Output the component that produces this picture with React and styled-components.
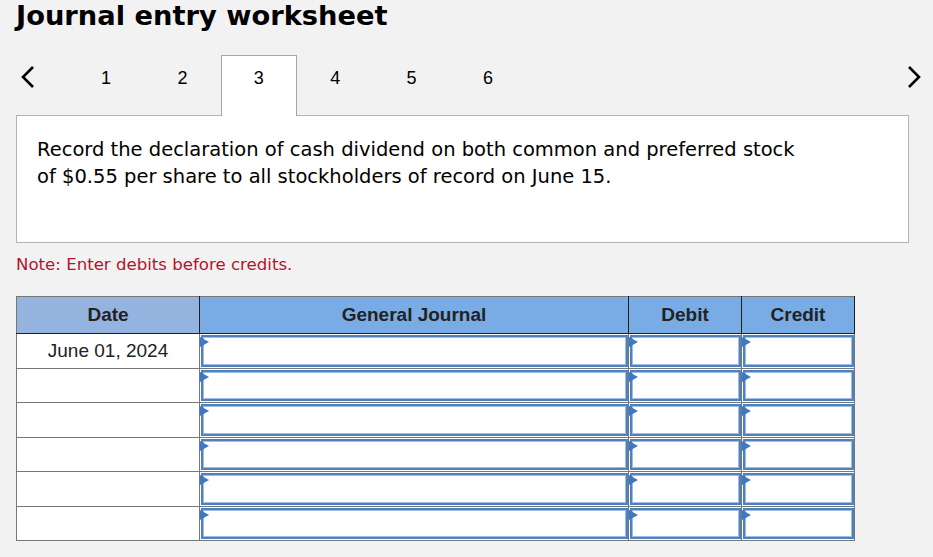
import React from "react";
import styled, { createGlobalStyle } from "styled-components";

const GlobalStyle = createGlobalStyle`
  html, body {
    margin: 0;
    padding: 0;
    background: #f2f2f2;
  }
  body {
    font-family: "DejaVu Sans", Verdana, sans-serif;
    color: #000;
  }
`;

const Page = styled.div`
  width: 933px;
  height: 557px;
  padding: 0 0 0 16px;
  box-sizing: border-box;
  overflow: hidden;
`;

const Title = styled.h1`
  margin: 0;
  font-family: "DejaVu Sans", Verdana, sans-serif;
  font-weight: bold;
  font-size: 27.3px;
  line-height: 32px;
  height: 32px;
`;

const TabBar = styled.div`
  display: flex;
  align-items: stretch;
  height: 60px;
  margin-top: 23px;
  width: 905px;
`;

const Arrow = styled.button`
  border: 0;
  background: none;
  padding: 10px 0 0 ${({ right }) => (right ? "0" : "5px")};
  width: 51.8px;
  box-sizing: border-box;
  display: flex;
  align-items: flex-start;
  justify-content: ${({ right }) => (right ? "flex-end" : "flex-start")};
  margin-left: ${({ right }) => (right ? "auto" : "0")};
  cursor: pointer;
`;

const Tab = styled.div`
  width: 76.4px;
  box-sizing: border-box;
  display: flex;
  justify-content: center;
  padding-top: 11px;
  font-family: "Liberation Sans", Arial, sans-serif;
  font-size: 18px;
  line-height: 22px;
  background: ${({ active }) => (active ? "#fff" : "transparent")};
  border: 1px solid ${({ active }) => (active ? "#a6a6a6" : "transparent")};
  border-bottom: 0;
  position: relative;
  z-index: 1;
  margin-bottom: -1px;
`;

const Prompt = styled.div`
  width: 893px;
  height: 128px;
  box-sizing: border-box;
  background: #fff;
  border: 1px solid #b3b3b3;
  padding: 20px 20px 0 20px;
  font-size: 19.5px;
  line-height: 27px;
`;

const Note = styled.p`
  margin: 11px 0 0 0;
  color: #b5122e;
  font-size: 16.6px;
  line-height: 22px;
`;

const Sheet = styled.table`
  margin-top: 20px;
  border-collapse: collapse;
  table-layout: fixed;
  width: 838px;
  font-family: "Liberation Sans", Arial, sans-serif;
  font-size: 19px;
`;

const Head = styled.th`
  height: 36px;
  padding: 0;
  font-weight: bold;
  color: #222;
  background: ${({ light }) => (light ? "#95b3df" : "#79ace4")};
  border: 1px solid #1f1f1f;
  border-top-color: #777;
  border-left-color: ${({ light }) => (light ? "#777" : "#1f1f1f")};
`;

const Cell = styled.td`
  height: 33.5px;
  padding: 0;
  background: #fff;
  border: 1px solid #777;
  text-align: center;
  color: #222;
`;

const EntryCell = styled.td`
  height: 33.5px;
  padding: 0;
  background: #fff;
  border: 1px solid #777;
  position: relative;
`;

const Input = styled.div`
  position: absolute;
  inset: 1px 0 1px 1px;
  border: 2px solid #4f81bd;
  box-shadow: inset 0 0 0 1px #9dbde6;
  background: #fff;
`;

const Marker = styled.span`
  position: absolute;
  left: -3px;
  top: 0;
  width: 0;
  height: 0;
  border-top: 5.5px solid transparent;
  border-bottom: 5.5px solid transparent;
  border-left: 9px solid #3c78c3;
`;

const Chevron = ({ dir }) => (
  <svg width="14" height="24" viewBox="0 0 14 24">
    <polyline
      points={dir === "left" ? "12,2 2,12 12,22" : "2,2 12,12 2,22"}
      fill="none"
      stroke="#000"
      strokeWidth="2.6"
    />
  </svg>
);

const Entry = () => (
  <EntryCell>
    <Input>
      <Marker />
    </Input>
  </EntryCell>
);

const rows = ["June 01, 2024", "", "", "", "", ""];

export default function App() {
  return (
    <Page>
      <GlobalStyle />
      <Title>Journal entry worksheet</Title>
      <TabBar>
        <Arrow>
          <Chevron dir="left" />
        </Arrow>
        {[1, 2, 3, 4, 5, 6].map((n) => (
          <Tab key={n} active={n === 3}>
            {n}
          </Tab>
        ))}
        <Arrow right>
          <Chevron dir="right" />
        </Arrow>
      </TabBar>
      <Prompt>
        Record the declaration of cash dividend on both common and preferred stock
        <br />
        of $0.55 per share to all stockholders of record on June 15.
      </Prompt>
      <Note>Note: Enter debits before credits.</Note>
      <Sheet>
        <colgroup>
          <col style={{ width: 183 }} />
          <col style={{ width: 429 }} />
          <col style={{ width: 113 }} />
          <col style={{ width: 113 }} />
        </colgroup>
        <thead>
          <tr>
            <Head light>Date</Head>
            <Head>General Journal</Head>
            <Head>Debit</Head>
            <Head>Credit</Head>
          </tr>
        </thead>
        <tbody>
          {rows.map((d, i) => (
            <tr key={i}>
              <Cell>{d}</Cell>
              <Entry />
              <Entry />
              <Entry />
            </tr>
          ))}
        </tbody>
      </Sheet>
    </Page>
  );
}
